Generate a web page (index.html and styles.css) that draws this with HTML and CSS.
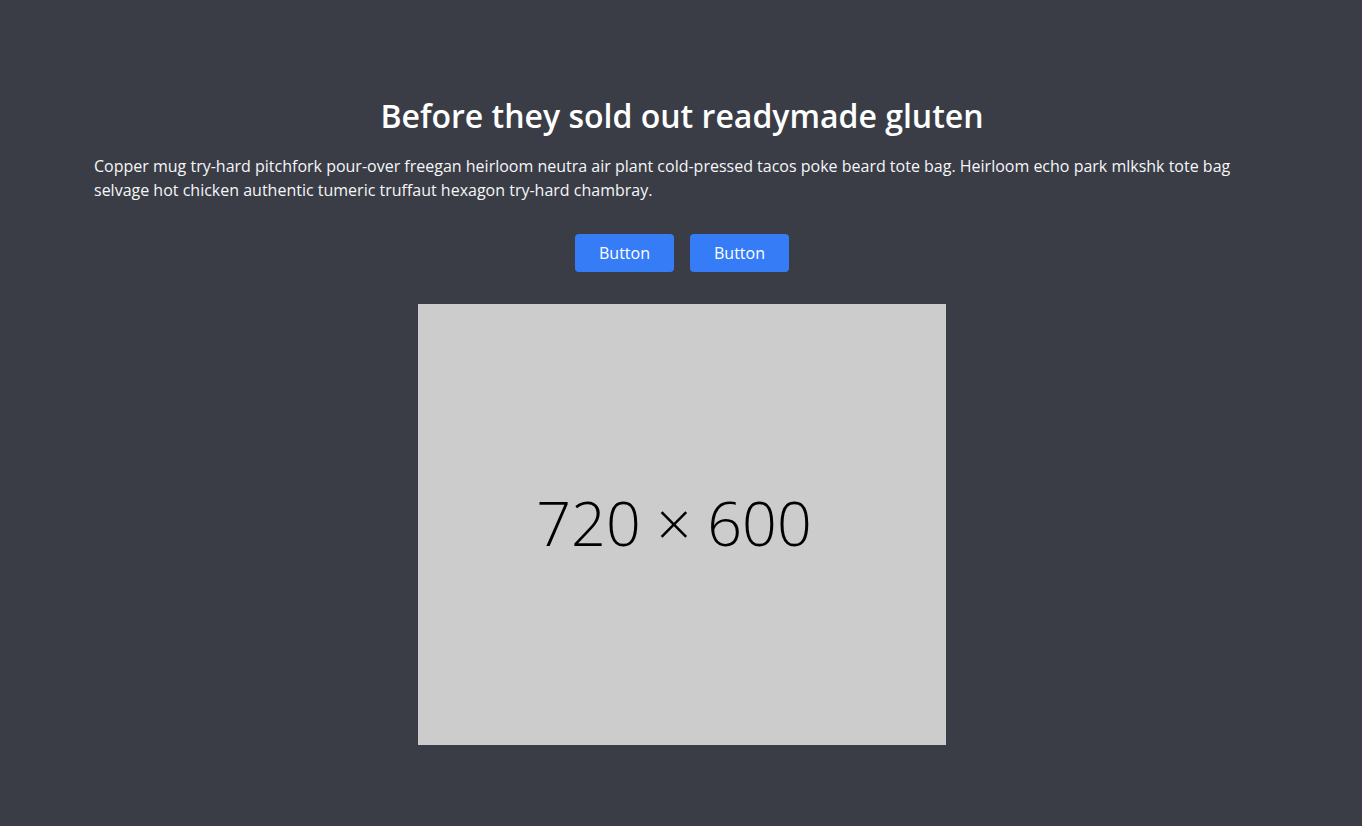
FILE: index.html
```html
<!DOCTYPE html>
<html lang="en">
<head>
<meta charset="utf-8">
<title>Before they sold out readymade gluten</title>
<link rel="stylesheet" href="styles.css">
</head>
<body>
<section class="hero">
  <div class="hero-text">
    <h1 class="hero-title">Before they sold out readymade gluten</h1>
    <p class="hero-copy">Copper mug try-hard pitchfork pour-over freegan heirloom neutra air plant cold-pressed tacos poke beard tote bag. Heirloom echo park mlkshk tote bag selvage hot chicken authentic tumeric truffaut hexagon try-hard chambray.</p>
  </div>
  <div class="hero-actions">
    <button class="btn" type="button">Button</button>
    <button class="btn" type="button">Button</button>
  </div>
  <div class="hero-image" role="img" aria-label="720 × 600 placeholder">
    <span class="hero-image-label">720 × 600</span>
  </div>
</section>
</body>
</html>
```

FILE: styles.css
```css
* {
  box-sizing: border-box;
}

html, body {
  margin: 0;
  padding: 0;
}

body {
  background: #3a3d46;
  color: #ffffff;
  font-family: "Open Sans", "Liberation Sans", sans-serif;
  min-height: 826px;
}

.hero {
  display: flex;
  flex-direction: column;
  align-items: center;
  padding: 96px 92px 80px 94px;
}

.hero-text {
  width: 100%;
  text-align: center;
}

.hero-title {
  margin: 0 0 18px;
  font-size: 32px;
  line-height: 40px;
  font-weight: 600;
  color: #ffffff;
}

.hero-copy {
  margin: 0;
  text-align: left;
  font-size: 16px;
  line-height: 24px;
  color: #f5f6f8;
}

.hero-actions {
  display: flex;
  gap: 16px;
  margin-top: 32px;
}

.btn {
  font-family: inherit;
  font-size: 16px;
  line-height: 24px;
  color: #ffffff;
  background: #367cf7;
  border: 0;
  border-radius: 4px;
  padding: 7px 24px;
  cursor: pointer;
}

.hero-image {
  margin-top: 32px;
  width: 528px;
  height: 441px;
  background: #cccccc;
  display: flex;
  align-items: center;
  justify-content: center;
}

.hero-image-label {
  font-size: 61px;
  font-weight: 300;
  color: #000000;
  line-height: 1;
  transform: translate(-8px, -2px);
}
```
